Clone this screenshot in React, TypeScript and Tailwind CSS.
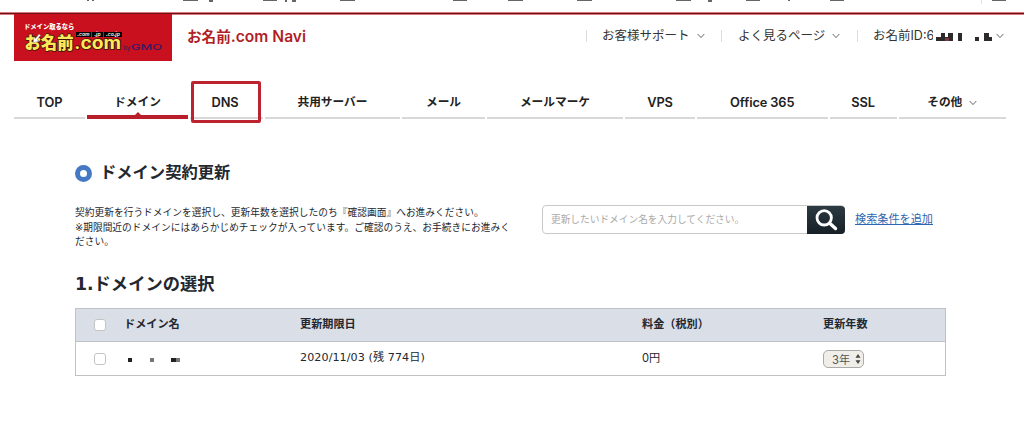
import { clsx } from "clsx";

const navItems = [
  { label: "TOP", width: "w-[71px]", latin: true },
  { label: "ドメイン", width: "w-[101px]", active: true },
  { label: "DNS", width: "w-[73px]", marked: true, latin: true },
  { label: "共用サーバー", width: "w-[135px]" },
  { label: "メール", width: "w-[83px]" },
  { label: "メールマーケ", width: "w-[136px]" },
  { label: "VPS", width: "w-[70px]", latin: true },
  { label: "Office 365", width: "w-[130.5px]", latin: true },
  { label: "SSL", width: "w-[67px]", latin: true },
  { label: "その他", width: "w-[107.5px]", more: true },
];

// x, width, height of what is left of the bar above the page
const remnants = [
  [87, 2, 1],
  [92, 2, 1],
  [183, 15, 1],
  [209, 4, 2],
  [263, 14, 1],
  [285, 2, 2],
  [292, 4, 2],
  [340, 15, 1],
  [453, 14, 1],
  [508, 15, 1],
  [577, 15, 1],
  [676, 15, 1],
  [708, 4, 2],
  [746, 14, 1],
  [788, 2, 1],
  [830, 14, 1],
  [992, 14, 1],
];

const Chevron = ({ className }: { className?: string }) => (
  <svg className={className} width="8" height="6" viewBox="0 0 8 6" fill="none">
    <path d="M.7 1 4 4.6 7.3 1" stroke="#666" strokeWidth="1" />
  </svg>
);

const Divider = () => <div className="h-3 w-px bg-[#dcdcdc]" />;

const Logo = () => (
  <div className="relative h-[47px] w-[158px] bg-[#c8101e] font-extrabold">
    <div className="absolute left-[10px] top-[9px] whitespace-nowrap text-[6.3px] leading-[8px] text-white">
      ドメイン取るなら
    </div>
    <div className="absolute left-[62px] top-[18px] flex gap-px text-[5px] font-semibold italic leading-[5px] text-white">
      <span className="w-[15px] bg-black text-center">.com</span>
      <span className="w-[11px] bg-black text-center">.jp</span>
      <span className="w-[18px] bg-black text-center">.co.jp</span>
    </div>
    <svg
      className="absolute left-[10px] top-[16px]"
      width="146"
      height="24"
      viewBox="0 0 146 24"
    >
      <g
        fill="#ffe85a"
        stroke="#3a1405"
        strokeWidth="1.6"
        paintOrder="stroke"
        strokeLinejoin="round"
      >
        <text x="0.5" y="18.5" fontSize="17" textLength="49" lengthAdjust="spacingAndGlyphs">
          お名前
        </text>
        <text x="50" y="18.5" fontSize="17" fontWeight="700" textLength="47" lengthAdjust="spacingAndGlyphs">
          .com
        </text>
      </g>
      <path d="m9 13 1-6 1.6 1.6L15 4l1.6 1.3-3.4 4.5 2 1.4z" fill="#fff" stroke="#777" strokeWidth=".5" />
      <text x="99" y="19.5" fontSize="6.5" fontWeight="400" fill="#3b1768">
        by
      </text>
      <text
        x="107"
        y="20"
        fontSize="8"
        fontWeight="500"
        fill="#3b1768"
        textLength="31"
        lengthAdjust="spacingAndGlyphs"
      >
        GMO
      </text>
    </svg>
  </div>
);

const MaskedId = () => (
  <svg className="ml-[3px] mt-[3px]" width="57" height="10" viewBox="0 0 57 10" fill="#2d2a2c">
    <path d="M0 5h5V1h4v4h3V1h5v8H0zM22 1h4v8h-4zM39 5h4v4h-4zM48 1h5v4h3v4h-8z" />
    <path d="M9 6h4v3H9z" fill="#7a3a40" />
  </svg>
);

const Checkbox = () => (
  <div className="ml-[18px] size-3 rounded-[3px] border border-[#c4c4c4] bg-white" />
);

const App = () => {
  return (
    <div
      className="h-[436px] w-[1024px] overflow-hidden bg-white text-[#222]"
      style={{ fontFamily: '"Inter", "Noto Sans CJK JP", sans-serif' }}
    >
      <div className="relative h-3">
        {remnants.map(([x, w, h]) => (
          <i
            key={x}
            className="absolute top-0 bg-[#666]"
            style={{ left: x, width: w, height: h }}
          />
        ))}
        <i className="absolute left-[981px] top-0 h-1 w-px bg-[#e2e2e2]" />
      </div>
      <div className="h-[3px] border-y border-[#d8777c] bg-[#6d1015]" />

      <header className="-mt-px flex h-[47px] pl-[14px]">
        <Logo />
        <h1 className="ml-[15px] w-[399px] whitespace-nowrap pt-[13px] text-[14.6px] font-semibold leading-5 text-[#b01f27]">
          お名前<span className="text-[15.6px]">.com Navi</span>
        </h1>
        <div className="flex h-[43px] items-center whitespace-nowrap text-[12.5px] leading-5 text-[#333]">
          <Divider />
          <span className="ml-[15px] w-[95px]">お客様サポート</span>
          <Chevron className="mr-[16px]" />
          <Divider />
          <span className="ml-[16px] w-[94px]">よく見るページ</span>
          <Chevron className="mr-[17px]" />
          <Divider />
          <span className="ml-[15px] w-[60px] overflow-hidden">お名前ID:6</span>
          <MaskedId />
          <Chevron className="ml-[3px]" />
        </div>
      </header>

      <nav className="mt-[19px] flex h-[43px] gap-[2px] pl-[14px] font-semibold">
        {navItems.map((item) => (
          <div
            key={item.label}
            className={clsx(
              "relative flex h-[39px] shrink-0 items-center justify-center whitespace-nowrap border-b-2 border-[#d8d8d8]",
              item.width,
              item.latin ? "pt-[8px] text-[12.8px] tracking-[-0.1px]" : "pt-[9px] text-[11.7px] font-bold",
              item.marked && "pr-[3px]",
              item.active && "border-b-4 border-[#b81f2b]! pt-[11px]"
            )}
          >
            {item.label}
            {item.more && <Chevron className="ml-[7px]" />}
            {item.active && (
              <svg className="absolute -bottom-px left-[47px]" width="8" height="4" viewBox="0 0 8 4">
                <path d="M0 4 4 0l4 4z" fill="#b81f2b" />
              </svg>
            )}
            {item.marked && (
              <div className="absolute left-px top-[1px] h-[42px] w-[70px] rounded-[2px] border-[3px] border-[#bd2230]" />
            )}
          </div>
        ))}
      </nav>

      <main
        className="ml-[75px] w-[871px] pt-[38px] text-[#23272f]"
        style={{ fontFamily: '"DejaVu Sans", "Noto Sans CJK JP", sans-serif' }}
      >
        <h2 className="flex h-6 items-center text-[16.3px] font-bold leading-6">
          <span className="mr-2 size-[17px] rounded-full border-[5px] border-[#4579c4]" />
          ドメイン契約更新
        </h2>

        <div className="mt-[20px] flex h-[48px]">
          <p className="w-[467px] whitespace-nowrap pt-px text-[9.68px] leading-[14.5px] tracking-[0.06px]">
            契約更新を行うドメインを選択し、更新年数を選択したのち『確認画面』へお進みください。
            <br />
            ※期限間近のドメインにはあらかじめチェックが入っています。ご確認のうえ、お手続きにお進みく
            <br />
            ださい。
          </p>
          <div className="flex h-[29px] w-[303px] items-center rounded border-[1.5px] border-[#c9c9c9] bg-white">
            <span className="flex-1 whitespace-nowrap pl-[8px] text-[9.7px] leading-4 text-[#a9a9a9]">
              更新したいドメイン名を入力してください。
            </span>
            <button className="-my-px -mr-px flex h-[28px] w-[38px] items-center justify-center rounded-r bg-linear-to-b from-[#2c3a42] to-[#172027]">
              <svg width="24" height="24" viewBox="0 0 24 24" fill="none" stroke="#fff" strokeLinecap="round">
                <circle cx="10.2" cy="9.8" r="7.2" strokeWidth="2.8" />
                <path d="m16 15.5 5.5 5" strokeWidth="3.4" />
              </svg>
            </button>
          </div>
          <a className="ml-[10px] h-5 whitespace-nowrap pt-[5px] text-[11.15px] leading-5 text-[#2e68b1] underline">
            検索条件を追加
          </a>
        </div>

        <h2 className="mt-[19px] h-6 text-[17.3px] font-bold leading-6">1.ドメインの選択</h2>

        <div className="mt-[12px] h-[68px] border border-[#bfc1c5] text-[11.15px] leading-4">
          <div className="grid h-[33px] grid-cols-[48px_176px_342px_181px_1fr] items-center border-b border-[#bfc1c5] bg-[#dadee7] font-bold">
            <Checkbox />
            <span>ドメイン名</span>
            <span>更新期限日</span>
            <span>料金（税別）</span>
            <span>更新年数</span>
          </div>
          <div className="grid h-[33px] grid-cols-[48px_176px_342px_181px_1fr] items-center">
            <Checkbox />
            <svg width="56" height="5" viewBox="0 0 56 5" className="mt-1 ml-1" fill="#222">
              <path d="M0 0h4v4H0zM43 0h5v4h-5z" />
              <path d="M22 0h4v4h-4zM48 0h4v4h-4z" fill="#777" />
            </svg>
            <span className="pb-px tracking-[0.07px]">2020/11/03 (残 774日)</span>
            <span className="pb-[2px] font-[Inter,'Noto_Sans_CJK_JP']">0円</span>
            <div className="flex h-[18px] w-[41px] items-center rounded-[5px] border border-[#aaa] bg-[#efeee9] pl-[8px] text-[#555]">
              <span className="pt-[3px] font-[Inter,'Noto_Sans_CJK_JP']">3年</span>
              <svg className="ml-[5px]" width="6" height="10" viewBox="0 0 6 10" fill="#444">
                <path d="M3 0l2.5 3.8H.5zM3 10 .5 6.2h5z" />
              </svg>
            </div>
          </div>
        </div>
      </main>
    </div>
  );
};

export default App;
